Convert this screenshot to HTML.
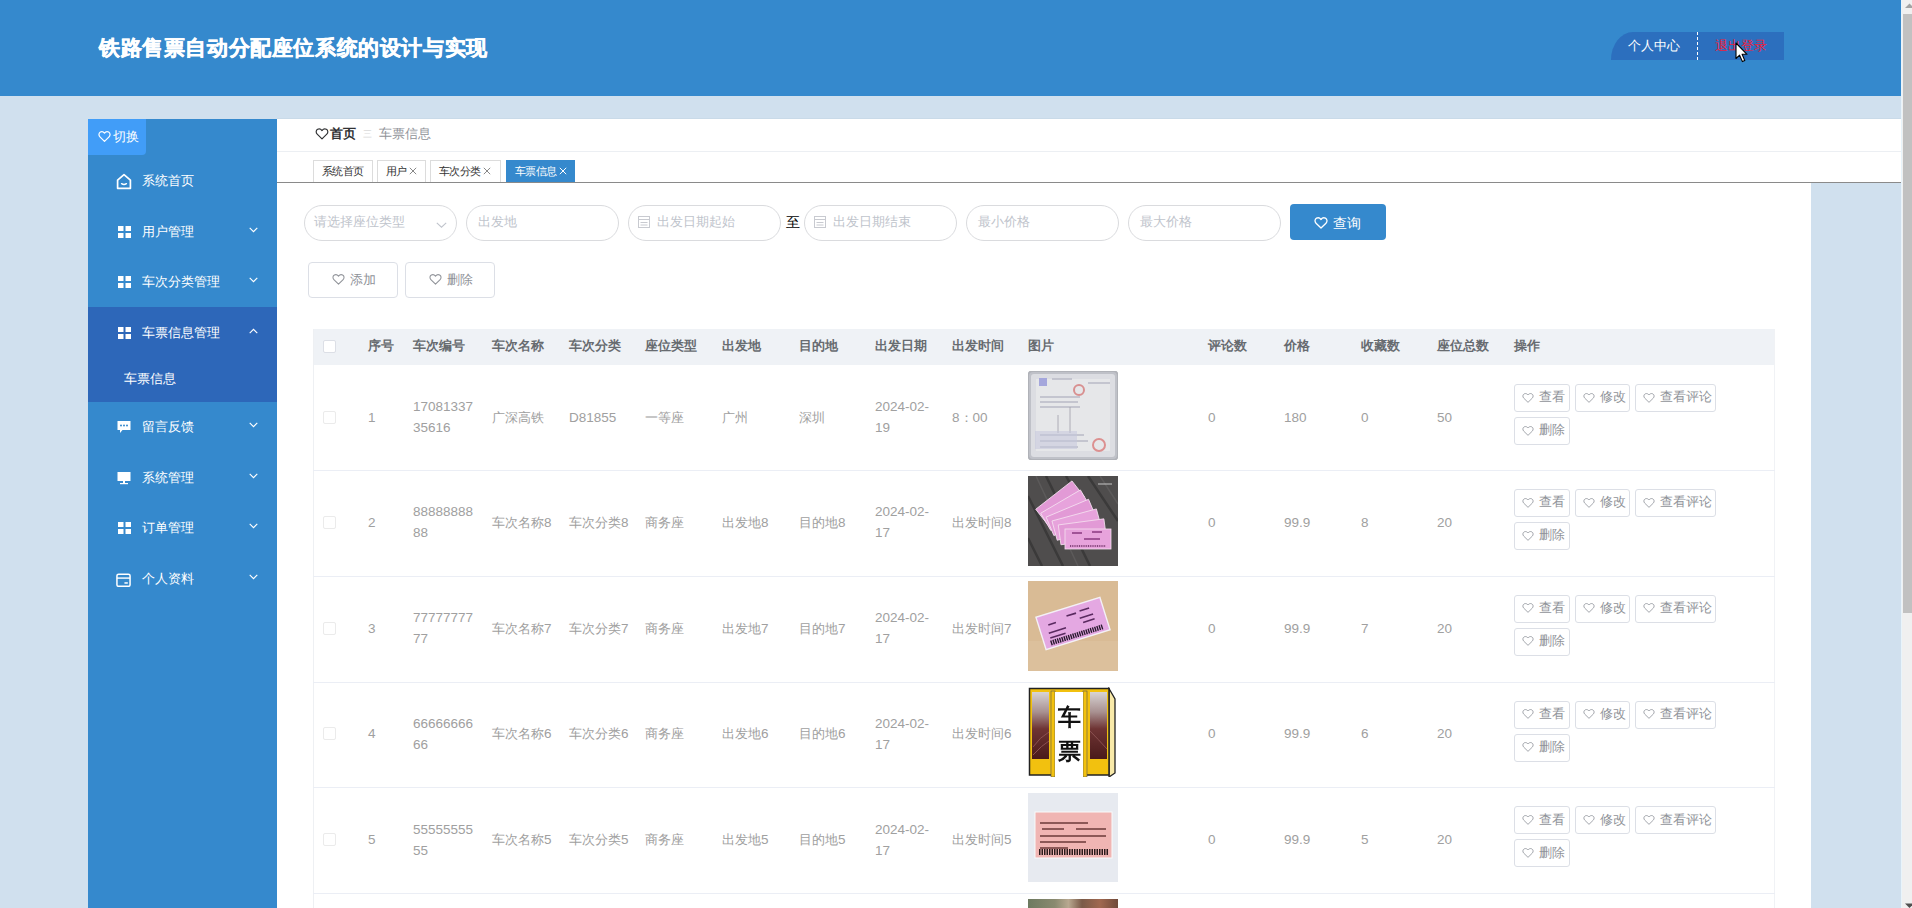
<!DOCTYPE html>
<html><head><meta charset="utf-8">
<style>
*{box-sizing:border-box;margin:0;padding:0}
html,body{width:1912px;height:908px;overflow:hidden}
body{position:relative;background:#d0e0ee;font-family:"Liberation Sans",sans-serif;color:#606266}
.abs{position:absolute}
#hdr{left:0;top:0;width:1901px;height:96px;background:#3589cd}
#title{left:99px;top:33px;font-size:21px;letter-spacing:0.6px;font-weight:bold;color:#fff;line-height:30px;white-space:nowrap;-webkit-text-stroke:0.35px #fff;text-shadow:0 0 1px rgba(255,255,255,.35)}
#ubox{left:1611px;top:32px;width:173px;height:28px;background:#2c6fbe;border-top-left-radius:22px 28px}
#ubox .t{position:absolute;top:0;line-height:28px;font-size:12.6px;white-space:nowrap}
#ubox .div{position:absolute;left:86px;top:0;height:28px;border-left:1px dashed #fff}
#scroll{left:1901px;top:0;width:11px;height:908px;background:#f0f0f0}
#thumb{left:1903px;top:14px;width:9px;height:599px;background:#c1c1c1}
#side{left:88px;top:119px;width:189px;height:789px;background:#3589cd}
#switch{left:88px;top:119px;width:58px;height:36px;background:#419df8;border-bottom-right-radius:4px;color:#fff;white-space:nowrap}
.mi{position:absolute;left:88px;width:189px;height:0;color:#fff;font-size:12.8px;font-weight:500;white-space:nowrap}
.mi .tx{position:absolute;left:54px;top:-10px;line-height:20px}
.mi .ic{position:absolute;left:29px;top:18px;width:14px;height:14px}
.mi .chev{position:absolute;left:161px;top:20px;width:9px;height:6px}
#grp{left:88px;top:307px;width:189px;height:95px;background:#2d67b9}
#panel{left:277px;top:119px;width:1624px;height:64px;background:#fff}
#bc{left:277px;top:151px;width:1624px;height:1px;background:#eceff3}
#tabline{left:277px;top:182px;width:1624px;height:1px;background:#8a8a8a}
#content{left:277px;top:183px;width:1534px;height:725px;background:#fff}
.tab{position:absolute;top:160px;height:22px;border:1px solid #dcdcdc;border-bottom:none;font-size:11px;letter-spacing:-0.6px;line-height:21px;color:#333;white-space:nowrap;padding-left:8px;background:#fff}
.tab.on{background:#3589cd;color:#fff;border-color:#3589cd}
.inp{position:absolute;top:205px;width:153px;height:36px;border:1px solid #dadbde;border-radius:18px;background:#fff;font-size:12.6px;color:#c0c4cc;line-height:32px;padding-left:10px;white-space:nowrap}
.btn{position:absolute;border:1px solid #dcdfe6;border-radius:4px;background:#fff;font-size:12.6px;color:#909399;white-space:nowrap}
.th{position:absolute;top:337px;font-size:12.8px;line-height:18px;font-weight:bold;color:#676b70;white-space:nowrap}
.td{position:absolute;font-size:13.5px;color:#a0a0a0;white-space:nowrap}
.td .c{font-size:12.8px}
.ab{position:absolute;height:28px;border:1px solid #dcdfe6;border-radius:3px;background:#fff;font-size:12.6px;line-height:25px;color:#909399;white-space:nowrap;padding-left:7px}
</style></head><body>
<div id="hdr" class="abs"></div>
<div id="title" class="abs">铁路售票自动分配座位系统的设计与实现</div>
<div id="ubox" class="abs">
  <span class="t" style="left:17px;color:#fff">个人中心</span>
  <span class="div"></span>
  <span class="t" style="left:104px;color:#ee1d3b">退出登录</span>
</div>
<svg class="abs" style="left:1735px;top:42px" width="14" height="21" viewBox="0 0 14 21"><path d="M1 1 V16.5 L4.6 13.2 L7.4 19.6 L9.8 18.6 L7.1 12.3 L12 12.3 Z" fill="#fff" stroke="#000" stroke-width="1.1" stroke-linejoin="round"/></svg>
<div id="scroll" class="abs"></div>
<div id="thumb" class="abs"></div>
<div class="abs" style="left:1901px;top:0;width:1px;height:908px;background:#e8f4fb"></div>
<svg class="abs" style="left:1904px;top:3px" width="8" height="6" viewBox="0 0 8 6"><path d="M1 5 L5.5 0.5 L10 5 Z" fill="#a3a3a3"/></svg>
<svg class="abs" style="left:1904px;top:903px" width="8" height="5" viewBox="0 0 8 5"><path d="M1 0.5 L5.5 5 L10 0.5 Z" fill="#505050"/></svg>

<div id="side" class="abs"></div>
<div id="grp" class="abs"></div>
<div id="switch" class="abs"><svg class="abs" style="left:10px;top:11px" width="13" height="13" viewBox="0 0 16 16"><path d="M8 14 L2.4 8.4 C0.6 6.6 0.8 3.6 2.9 2.4 C4.8 1.4 6.8 2.2 8 3.9 C9.2 2.2 11.2 1.4 13.1 2.4 C15.2 3.6 15.4 6.6 13.6 8.4 Z" fill="none" stroke="#fff" stroke-width="1.5" stroke-linejoin="round"/></svg><span class="abs" style="left:25px;top:9px;line-height:18px;font-size:13px;letter-spacing:-0.2px">切换</span></div>
<div class="mi" style="top:181px"><svg class="ic" viewBox="0 0 16 16" style="left:28px;top:-8.5px;width:16px;height:17px"><path d="M1.6 6.6 L8 1.2 L14.4 6.6 V14.8 H1.6 Z" fill="none" stroke="#fff" stroke-width="1.7" stroke-linejoin="round"/><path d="M5.6 10.2 Q8 11.8 10.4 10.2" fill="none" stroke="#fff" stroke-width="1.5" stroke-linecap="round"/></svg><span class="tx">系统首页</span></div>
<div class="mi" style="top:232px"><svg class="ic" viewBox="0 0 13 12" style="left:30px;top:-6px;width:13px;height:12px"><rect x="0" y="0" width="5.5" height="5" fill="#fff"/><rect x="7.5" y="0" width="5.5" height="5" fill="#fff"/><rect x="0" y="7" width="5.5" height="5" fill="#fff"/><rect x="7.5" y="7" width="5.5" height="5" fill="#fff"/></svg><span class="tx">用户管理</span><svg class="chev" viewBox="0 0 9 6" style="left:161px;top:-5px;width:9px;height:6px"><path d="M0.7 0.8 L4.5 4.6 L8.3 0.8" fill="none" stroke="#fff" stroke-width="1.1"/></svg></div>
<div class="mi" style="top:282px"><svg class="ic" viewBox="0 0 13 12" style="left:30px;top:-6px;width:13px;height:12px"><rect x="0" y="0" width="5.5" height="5" fill="#fff"/><rect x="7.5" y="0" width="5.5" height="5" fill="#fff"/><rect x="0" y="7" width="5.5" height="5" fill="#fff"/><rect x="7.5" y="7" width="5.5" height="5" fill="#fff"/></svg><span class="tx">车次分类管理</span><svg class="chev" viewBox="0 0 9 6" style="left:161px;top:-5px;width:9px;height:6px"><path d="M0.7 0.8 L4.5 4.6 L8.3 0.8" fill="none" stroke="#fff" stroke-width="1.1"/></svg></div>
<div class="mi" style="top:333px"><svg class="ic" viewBox="0 0 13 12" style="left:30px;top:-6px;width:13px;height:12px"><rect x="0" y="0" width="5.5" height="5" fill="#fff"/><rect x="7.5" y="0" width="5.5" height="5" fill="#fff"/><rect x="0" y="7" width="5.5" height="5" fill="#fff"/><rect x="7.5" y="7" width="5.5" height="5" fill="#fff"/></svg><span class="tx">车票信息管理</span><svg class="chev" viewBox="0 0 9 6" style="left:161px;top:-5px;width:9px;height:6px"><path d="M0.7 5.2 L4.5 1.4 L8.3 5.2" fill="none" stroke="#fff" stroke-width="1.1"/></svg></div>
<div class="mi" style="top:427px"><svg class="ic" viewBox="0 0 14 14" style="left:29px;top:-7px;width:14px;height:14px"><path d="M0.5 1 H13.5 V10 H5.5 L3 13 V10 H0.5 Z" fill="#fff"/><circle cx="4" cy="5.5" r="1" fill="#3589cd"/><circle cx="7" cy="5.5" r="1" fill="#3589cd"/><circle cx="10" cy="5.5" r="1" fill="#3589cd"/></svg><span class="tx">留言反馈</span><svg class="chev" viewBox="0 0 9 6" style="left:161px;top:-5px;width:9px;height:6px"><path d="M0.7 0.8 L4.5 4.6 L8.3 0.8" fill="none" stroke="#fff" stroke-width="1.1"/></svg></div>
<div class="mi" style="top:478px"><svg class="ic" viewBox="0 0 14 14" style="left:29px;top:-7px;width:14px;height:14px"><rect x="0.5" y="1" width="13" height="9" fill="#fff"/><rect x="6" y="10" width="2" height="2" fill="#fff"/><rect x="3" y="12" width="8" height="1.2" fill="#fff"/></svg><span class="tx">系统管理</span><svg class="chev" viewBox="0 0 9 6" style="left:161px;top:-5px;width:9px;height:6px"><path d="M0.7 0.8 L4.5 4.6 L8.3 0.8" fill="none" stroke="#fff" stroke-width="1.1"/></svg></div>
<div class="mi" style="top:528px"><svg class="ic" viewBox="0 0 13 12" style="left:30px;top:-6px;width:13px;height:12px"><rect x="0" y="0" width="5.5" height="5" fill="#fff"/><rect x="7.5" y="0" width="5.5" height="5" fill="#fff"/><rect x="0" y="7" width="5.5" height="5" fill="#fff"/><rect x="7.5" y="7" width="5.5" height="5" fill="#fff"/></svg><span class="tx">订单管理</span><svg class="chev" viewBox="0 0 9 6" style="left:161px;top:-5px;width:9px;height:6px"><path d="M0.7 0.8 L4.5 4.6 L8.3 0.8" fill="none" stroke="#fff" stroke-width="1.1"/></svg></div>
<div class="mi" style="top:579px"><svg class="ic" viewBox="0 0 16 15" style="left:28px;top:-6.5px;width:15px;height:14.5px"><rect x="1" y="1" width="14" height="13" rx="1.8" fill="none" stroke="#fff" stroke-width="1.6"/><path d="M1 5.2 H15" stroke="#fff" stroke-width="1.5"/><path d="M9 10.4 H12.6" stroke="#fff" stroke-width="1.6"/></svg><span class="tx">个人资料</span><svg class="chev" viewBox="0 0 9 6" style="left:161px;top:-5px;width:9px;height:6px"><path d="M0.7 0.8 L4.5 4.6 L8.3 0.8" fill="none" stroke="#fff" stroke-width="1.1"/></svg></div>
<div class="mi" style="top:379px"><span class="tx" style="left:36px">车票信息</span></div>

<div id="panel" class="abs"></div>
<div class="abs" style="left:277px;top:118px;width:1624px;height:1px;background:#c9dae8"></div>
<div id="bc" class="abs"></div>
<div id="tabline" class="abs"></div>
<div id="content" class="abs"></div>
<div class="abs" style="left:314px;top:124px;height:18px;line-height:18px;font-size:13px;white-space:nowrap;color:#303133"><svg width="14" height="14" viewBox="0 0 16 16" style="display:inline-block;vertical-align:middle;margin-left:1px"><path d="M8 13.6 L2.5 8.2 C0.8 6.5 1 3.7 3 2.6 C4.9 1.6 6.8 2.4 8 4.1 C9.2 2.4 11.1 1.6 13 2.6 C15 3.7 15.2 6.5 13.5 8.2 Z" fill="none" stroke="#303133" stroke-width="1.35" stroke-linejoin="round"/></svg><span style="vertical-align:middle;font-weight:bold;margin-left:1px;letter-spacing:-0.3px">首页</span><span style="vertical-align:middle;color:#dadada;margin-left:8px;font-size:9px">三</span><span style="vertical-align:middle;color:#909399;margin-left:7px;letter-spacing:-0.3px">车票信息</span></div>
<div class="tab" style="left:313px;width:60px">系统首页</div>
<div class="tab" style="left:377px;width:49px">用户<svg width="8" height="8" viewBox="0 0 8 8" style="display:inline-block;vertical-align:middle;margin-left:2px;margin-top:-2px"><path d="M0.8 0.8 L7.2 7.2 M7.2 0.8 L0.8 7.2" stroke="#888" stroke-width="1"/></svg></div>
<div class="tab" style="left:430px;width:71px">车次分类<svg width="8" height="8" viewBox="0 0 8 8" style="display:inline-block;vertical-align:middle;margin-left:2px;margin-top:-2px"><path d="M0.8 0.8 L7.2 7.2 M7.2 0.8 L0.8 7.2" stroke="#888" stroke-width="1"/></svg></div>
<div class="tab on" style="left:506px;width:69px">车票信息<svg width="8" height="8" viewBox="0 0 8 8" style="display:inline-block;vertical-align:middle;margin-left:2px;margin-top:-2px"><path d="M0.8 0.8 L7.2 7.2 M7.2 0.8 L0.8 7.2" stroke="#fff" stroke-width="1"/></svg></div>

<div class="inp" style="left:304px;padding-left:9px"><svg width="11" height="6" viewBox="0 0 11 6" style="position:absolute;left:131px;top:16px"><path d="M0.8 0.8 L5.5 5.2 L10.2 0.8" fill="none" stroke="#c0c4cc" stroke-width="1.1"/></svg>请选择座位类型</div>
<div class="inp" style="left:466px;padding-left:11px">出发地</div>
<div class="inp" style="left:628px;padding-left:28px"><svg width="12" height="12" viewBox="0 0 12 12" style="position:absolute;left:9px;top:10px"><rect x="0.5" y="0.5" width="11" height="11" fill="none" stroke="#c8cad0" stroke-width="1"/><path d="M0.5 3.5 H11.5 M2.5 6.5 H9.5 M2.5 9 H9.5" stroke="#c8cad0" stroke-width="1"/></svg>出发日期起始</div>
<div class="inp" style="left:804px;padding-left:28px"><svg width="12" height="12" viewBox="0 0 12 12" style="position:absolute;left:9px;top:10px"><rect x="0.5" y="0.5" width="11" height="11" fill="none" stroke="#c8cad0" stroke-width="1"/><path d="M0.5 3.5 H11.5 M2.5 6.5 H9.5 M2.5 9 H9.5" stroke="#c8cad0" stroke-width="1"/></svg>出发日期结束</div>
<div class="inp" style="left:966px;padding-left:10.5px">最小价格</div>
<div class="inp" style="left:1128px;padding-left:10.5px">最大价格</div>
<div class="abs" style="left:786px;top:213px;font-size:14px;line-height:18px;color:#000">至</div>
<div class="abs" style="left:1290px;top:204px;width:96px;height:36px;background:#3589cd;border-radius:4px;color:#fff;font-size:14px;line-height:36px;white-space:nowrap;padding-left:24px"><svg width="14" height="14" viewBox="0 0 16 16" style="display:inline-block;vertical-align:middle;"><path d="M8 13.8 L2.3 8.2 C0.6 6.5 0.8 3.6 2.9 2.5 C4.8 1.5 6.8 2.3 8 4 C9.2 2.3 11.2 1.5 13.1 2.5 C15.2 3.6 15.4 6.5 13.7 8.2 Z" fill="none" stroke="#fff" stroke-width="1.5" stroke-linejoin="round"/></svg><span style="vertical-align:middle;margin-left:5px">查询</span></div>
<div class="btn" style="left:308px;top:262px;width:90px;height:36px;line-height:32px;padding-left:23px"><svg width="13" height="13" viewBox="0 0 16 16" style="display:inline-block;vertical-align:middle;"><path d="M8 13.8 L2.3 8.2 C0.6 6.5 0.8 3.6 2.9 2.5 C4.8 1.5 6.8 2.3 8 4 C9.2 2.3 11.2 1.5 13.1 2.5 C15.2 3.6 15.4 6.5 13.7 8.2 Z" fill="none" stroke="#909399" stroke-width="1.3" stroke-linejoin="round"/></svg><span style="vertical-align:middle;margin-left:5px">添加</span></div>
<div class="btn" style="left:405px;top:262px;width:90px;height:36px;line-height:32px;padding-left:23px"><svg width="13" height="13" viewBox="0 0 16 16" style="display:inline-block;vertical-align:middle;"><path d="M8 13.8 L2.3 8.2 C0.6 6.5 0.8 3.6 2.9 2.5 C4.8 1.5 6.8 2.3 8 4 C9.2 2.3 11.2 1.5 13.1 2.5 C15.2 3.6 15.4 6.5 13.7 8.2 Z" fill="none" stroke="#909399" stroke-width="1.3" stroke-linejoin="round"/></svg><span style="vertical-align:middle;margin-left:5px">删除</span></div>









<!--TABLE-->
<div class="abs" style="left:313px;top:329px;width:1462px;height:36px;background:#eff2f6"></div>
<div class="abs" style="left:313px;top:329px;width:1px;height:579px;background:#eef0f3"></div>
<div class="abs" style="left:1774px;top:329px;width:1px;height:579px;background:#f0f2f5"></div>
<div class="abs" style="left:323px;top:340px;width:13px;height:13px;border:1px solid #dcdfe6;background:#fff;border-radius:2px"></div>
<div class="th" style="left:368px">序号</div>
<div class="th" style="left:413px">车次编号</div>
<div class="th" style="left:492px">车次名称</div>
<div class="th" style="left:569px">车次分类</div>
<div class="th" style="left:645px">座位类型</div>
<div class="th" style="left:722px">出发地</div>
<div class="th" style="left:799px">目的地</div>
<div class="th" style="left:875px">出发日期</div>
<div class="th" style="left:952px">出发时间</div>
<div class="th" style="left:1028px">图片</div>
<div class="th" style="left:1208px">评论数</div>
<div class="th" style="left:1284px">价格</div>
<div class="th" style="left:1361px">收藏数</div>
<div class="th" style="left:1437px">座位总数</div>
<div class="th" style="left:1514px">操作</div>
<div class="abs" style="left:323px;top:410.7px;width:13px;height:13px;border:1px solid #ebebeb;border-radius:2px;background:#fff"></div>
<div class="td" style="left:368px;top:406.7px;line-height:21px">1</div>
<div class="td" style="left:413px;top:396.2px;line-height:21px">17081337<br>35616</div>
<div class="td" style="left:492px;top:406.7px;line-height:21px"><span class="c">广深高铁</span></div>
<div class="td" style="left:569px;top:406.7px;line-height:21px">D81855</div>
<div class="td" style="left:645px;top:406.7px;line-height:21px"><span class="c">一等座</span></div>
<div class="td" style="left:722px;top:406.7px;line-height:21px"><span class="c">广州</span></div>
<div class="td" style="left:799px;top:406.7px;line-height:21px"><span class="c">深圳</span></div>
<div class="td" style="left:875px;top:396.2px;line-height:21px">2024-02-<br>19</div>
<div class="td" style="left:952px;top:406.7px;line-height:21px">8<span class="c">：</span>00</div>
<div class="abs" style="left:1028px;top:370.5px;width:90px;height:90px;overflow:hidden;filter:blur(0.4px)"><svg width="90" height="89" viewBox="0 0 90 89">
<rect width="90" height="89" rx="5" fill="#bfc1c8"/>
<rect x="3" y="3" width="84" height="83" rx="3" fill="#dcdde2"/>
<rect x="8" y="8" width="74" height="72" fill="#e6e7e9"/>
<rect x="11" y="7" width="8" height="8" fill="#a5a7dc"/>
<circle cx="51" cy="19" r="5" fill="none" stroke="#d89090" stroke-width="2"/>
<circle cx="71" cy="74" r="6" fill="none" stroke="#dc9090" stroke-width="2"/>
<path d="M12 26 H52 M12 31 H50 M12 36 H52 M12 64 H56 M12 70 H60 M12 76 H50 M24 8 H44 M60 12 H82" stroke="#b9bac6" stroke-width="1.3"/>
<path d="M42 36 V62 M30 44 V62" stroke="#a0a0a8" stroke-width="0.8"/>
<rect x="7" y="60" width="42" height="18" fill="#c4c6dc" opacity=".55"/>
<rect x="0" y="0" width="90" height="89" rx="5" fill="none" stroke="#b0b2b8" stroke-width="2"/>
</svg></div>
<div class="td" style="left:1208px;top:406.7px;line-height:21px">0</div>
<div class="td" style="left:1284px;top:406.7px;line-height:21px">180</div>
<div class="td" style="left:1361px;top:406.7px;line-height:21px">0</div>
<div class="td" style="left:1437px;top:406.7px;line-height:21px">50</div>
<div class="ab" style="left:1514px;top:384.0px;width:56px"><svg width="12" height="12" viewBox="0 0 16 16" style="display:inline-block;vertical-align:middle;"><path d="M8 13.8 L2.3 8.2 C0.6 6.5 0.8 3.6 2.9 2.5 C4.8 1.5 6.8 2.3 8 4 C9.2 2.3 11.2 1.5 13.1 2.5 C15.2 3.6 15.4 6.5 13.7 8.2 Z" fill="none" stroke="#a0a3aa" stroke-width="1.3" stroke-linejoin="round"/></svg><span style="vertical-align:middle;margin-left:5px">查看</span></div>
<div class="ab" style="left:1575px;top:384.0px;width:55px"><svg width="12" height="12" viewBox="0 0 16 16" style="display:inline-block;vertical-align:middle;"><path d="M8 13.8 L2.3 8.2 C0.6 6.5 0.8 3.6 2.9 2.5 C4.8 1.5 6.8 2.3 8 4 C9.2 2.3 11.2 1.5 13.1 2.5 C15.2 3.6 15.4 6.5 13.7 8.2 Z" fill="none" stroke="#a0a3aa" stroke-width="1.3" stroke-linejoin="round"/></svg><span style="vertical-align:middle;margin-left:5px">修改</span></div>
<div class="ab" style="left:1635px;top:384.0px;width:81px"><svg width="12" height="12" viewBox="0 0 16 16" style="display:inline-block;vertical-align:middle;"><path d="M8 13.8 L2.3 8.2 C0.6 6.5 0.8 3.6 2.9 2.5 C4.8 1.5 6.8 2.3 8 4 C9.2 2.3 11.2 1.5 13.1 2.5 C15.2 3.6 15.4 6.5 13.7 8.2 Z" fill="none" stroke="#a0a3aa" stroke-width="1.3" stroke-linejoin="round"/></svg><span style="vertical-align:middle;margin-left:5px">查看评论</span></div>
<div class="ab" style="left:1514px;top:417.0px;width:56px"><svg width="12" height="12" viewBox="0 0 16 16" style="display:inline-block;vertical-align:middle;"><path d="M8 13.8 L2.3 8.2 C0.6 6.5 0.8 3.6 2.9 2.5 C4.8 1.5 6.8 2.3 8 4 C9.2 2.3 11.2 1.5 13.1 2.5 C15.2 3.6 15.4 6.5 13.7 8.2 Z" fill="none" stroke="#a0a3aa" stroke-width="1.3" stroke-linejoin="round"/></svg><span style="vertical-align:middle;margin-left:5px">删除</span></div>
<div class="abs" style="left:313px;top:470.0px;width:1462px;height:1px;background:#ebeef5"></div>
<div class="abs" style="left:323px;top:515.7px;width:13px;height:13px;border:1px solid #ebebeb;border-radius:2px;background:#fff"></div>
<div class="td" style="left:368px;top:511.7px;line-height:21px">2</div>
<div class="td" style="left:413px;top:501.2px;line-height:21px">88888888<br>88</div>
<div class="td" style="left:492px;top:511.7px;line-height:21px"><span class="c">车次名称</span>8</div>
<div class="td" style="left:569px;top:511.7px;line-height:21px"><span class="c">车次分类</span>8</div>
<div class="td" style="left:645px;top:511.7px;line-height:21px"><span class="c">商务座</span></div>
<div class="td" style="left:722px;top:511.7px;line-height:21px"><span class="c">出发地</span>8</div>
<div class="td" style="left:799px;top:511.7px;line-height:21px"><span class="c">目的地</span>8</div>
<div class="td" style="left:875px;top:501.2px;line-height:21px">2024-02-<br>17</div>
<div class="td" style="left:952px;top:511.7px;line-height:21px"><span class="c">出发时间</span>8</div>
<div class="abs" style="left:1028px;top:475.5px;width:90px;height:90px;overflow:hidden;filter:blur(0.4px)"><svg width="90" height="90" viewBox="0 0 90 90">
<rect width="90" height="90" fill="#4f4d4d"/>
<path d="M0 20 L35 90 M18 0 L62 90 M60 0 L90 45 M0 62 L14 90 M38 0 L52 25" stroke="#3b3a3a" stroke-width="2.5"/>
<path d="M8 0 L50 90 M72 0 L90 28" stroke="#5c5a5a" stroke-width="1.5"/>
<g stroke="#f5e0f0" stroke-width="0.8"><g transform="translate(32.0 27.0) rotate(-38.0)"><rect x="-23" y="-10" width="46" height="20" fill="#e29ad6"/></g><g transform="translate(37.6 34.2) rotate(-30.4)"><rect x="-23" y="-10" width="46" height="20" fill="#e7a3dc"/></g><g transform="translate(43.2 41.4) rotate(-22.8)"><rect x="-23" y="-10" width="46" height="20" fill="#e29ad6"/></g><g transform="translate(48.8 48.6) rotate(-15.2)"><rect x="-23" y="-10" width="46" height="20" fill="#e7a3dc"/></g><g transform="translate(54.4 55.8) rotate(-7.6)"><rect x="-23" y="-10" width="46" height="20" fill="#e29ad6"/></g><g transform="translate(60.0 63.0) rotate(0.0)"><rect x="-23" y="-10" width="46" height="20" fill="#e7a3dc"/></g></g>
<path d="M44 57 H54 M64 56 H74 M56 63 H72" stroke="#8a3a80" stroke-width="1.3"/>
<path d="M42 70 H78" stroke="#6a2a60" stroke-width="1.6" stroke-dasharray="1 0.8"/>
<path d="M70 8 H84" stroke="#ddd" stroke-width="1.2" opacity=".7"/>
</svg></div>
<div class="td" style="left:1208px;top:511.7px;line-height:21px">0</div>
<div class="td" style="left:1284px;top:511.7px;line-height:21px">99.9</div>
<div class="td" style="left:1361px;top:511.7px;line-height:21px">8</div>
<div class="td" style="left:1437px;top:511.7px;line-height:21px">20</div>
<div class="ab" style="left:1514px;top:489.0px;width:56px"><svg width="12" height="12" viewBox="0 0 16 16" style="display:inline-block;vertical-align:middle;"><path d="M8 13.8 L2.3 8.2 C0.6 6.5 0.8 3.6 2.9 2.5 C4.8 1.5 6.8 2.3 8 4 C9.2 2.3 11.2 1.5 13.1 2.5 C15.2 3.6 15.4 6.5 13.7 8.2 Z" fill="none" stroke="#a0a3aa" stroke-width="1.3" stroke-linejoin="round"/></svg><span style="vertical-align:middle;margin-left:5px">查看</span></div>
<div class="ab" style="left:1575px;top:489.0px;width:55px"><svg width="12" height="12" viewBox="0 0 16 16" style="display:inline-block;vertical-align:middle;"><path d="M8 13.8 L2.3 8.2 C0.6 6.5 0.8 3.6 2.9 2.5 C4.8 1.5 6.8 2.3 8 4 C9.2 2.3 11.2 1.5 13.1 2.5 C15.2 3.6 15.4 6.5 13.7 8.2 Z" fill="none" stroke="#a0a3aa" stroke-width="1.3" stroke-linejoin="round"/></svg><span style="vertical-align:middle;margin-left:5px">修改</span></div>
<div class="ab" style="left:1635px;top:489.0px;width:81px"><svg width="12" height="12" viewBox="0 0 16 16" style="display:inline-block;vertical-align:middle;"><path d="M8 13.8 L2.3 8.2 C0.6 6.5 0.8 3.6 2.9 2.5 C4.8 1.5 6.8 2.3 8 4 C9.2 2.3 11.2 1.5 13.1 2.5 C15.2 3.6 15.4 6.5 13.7 8.2 Z" fill="none" stroke="#a0a3aa" stroke-width="1.3" stroke-linejoin="round"/></svg><span style="vertical-align:middle;margin-left:5px">查看评论</span></div>
<div class="ab" style="left:1514px;top:522.0px;width:56px"><svg width="12" height="12" viewBox="0 0 16 16" style="display:inline-block;vertical-align:middle;"><path d="M8 13.8 L2.3 8.2 C0.6 6.5 0.8 3.6 2.9 2.5 C4.8 1.5 6.8 2.3 8 4 C9.2 2.3 11.2 1.5 13.1 2.5 C15.2 3.6 15.4 6.5 13.7 8.2 Z" fill="none" stroke="#a0a3aa" stroke-width="1.3" stroke-linejoin="round"/></svg><span style="vertical-align:middle;margin-left:5px">删除</span></div>
<div class="abs" style="left:313px;top:575.8px;width:1462px;height:1px;background:#ebeef5"></div>
<div class="abs" style="left:323px;top:621.5px;width:13px;height:13px;border:1px solid #ebebeb;border-radius:2px;background:#fff"></div>
<div class="td" style="left:368px;top:617.5px;line-height:21px">3</div>
<div class="td" style="left:413px;top:607.0px;line-height:21px">77777777<br>77</div>
<div class="td" style="left:492px;top:617.5px;line-height:21px"><span class="c">车次名称</span>7</div>
<div class="td" style="left:569px;top:617.5px;line-height:21px"><span class="c">车次分类</span>7</div>
<div class="td" style="left:645px;top:617.5px;line-height:21px"><span class="c">商务座</span></div>
<div class="td" style="left:722px;top:617.5px;line-height:21px"><span class="c">出发地</span>7</div>
<div class="td" style="left:799px;top:617.5px;line-height:21px"><span class="c">目的地</span>7</div>
<div class="td" style="left:875px;top:607.0px;line-height:21px">2024-02-<br>17</div>
<div class="td" style="left:952px;top:617.5px;line-height:21px"><span class="c">出发时间</span>7</div>
<div class="abs" style="left:1028px;top:581.3px;width:90px;height:90px;overflow:hidden;filter:blur(0.4px)"><svg width="90" height="90" viewBox="0 0 90 90">
<rect width="90" height="90" fill="#d9bb95"/>
<rect x="0" y="60" width="90" height="30" fill="#dcc09c"/>
<g transform="translate(45 42.5) rotate(-17.4)">
<rect x="-33.5" y="-17" width="67" height="34" fill="#e4a8e2" stroke="#f4f0f6" stroke-width="1.4"/>
<path d="M-24 -6 H-16 M-4 -9 H6 M10 -10 H20 M-26 2 H-8 M-26 7 H-10 M8 -3 H22 M10 2 H22" stroke="#5a2a60" stroke-width="1.6"/>
<path d="M-27 12 H28" stroke="#2a1a30" stroke-width="5" stroke-dasharray="1.4 0.9"/>
</g>
</svg></div>
<div class="td" style="left:1208px;top:617.5px;line-height:21px">0</div>
<div class="td" style="left:1284px;top:617.5px;line-height:21px">99.9</div>
<div class="td" style="left:1361px;top:617.5px;line-height:21px">7</div>
<div class="td" style="left:1437px;top:617.5px;line-height:21px">20</div>
<div class="ab" style="left:1514px;top:594.8px;width:56px"><svg width="12" height="12" viewBox="0 0 16 16" style="display:inline-block;vertical-align:middle;"><path d="M8 13.8 L2.3 8.2 C0.6 6.5 0.8 3.6 2.9 2.5 C4.8 1.5 6.8 2.3 8 4 C9.2 2.3 11.2 1.5 13.1 2.5 C15.2 3.6 15.4 6.5 13.7 8.2 Z" fill="none" stroke="#a0a3aa" stroke-width="1.3" stroke-linejoin="round"/></svg><span style="vertical-align:middle;margin-left:5px">查看</span></div>
<div class="ab" style="left:1575px;top:594.8px;width:55px"><svg width="12" height="12" viewBox="0 0 16 16" style="display:inline-block;vertical-align:middle;"><path d="M8 13.8 L2.3 8.2 C0.6 6.5 0.8 3.6 2.9 2.5 C4.8 1.5 6.8 2.3 8 4 C9.2 2.3 11.2 1.5 13.1 2.5 C15.2 3.6 15.4 6.5 13.7 8.2 Z" fill="none" stroke="#a0a3aa" stroke-width="1.3" stroke-linejoin="round"/></svg><span style="vertical-align:middle;margin-left:5px">修改</span></div>
<div class="ab" style="left:1635px;top:594.8px;width:81px"><svg width="12" height="12" viewBox="0 0 16 16" style="display:inline-block;vertical-align:middle;"><path d="M8 13.8 L2.3 8.2 C0.6 6.5 0.8 3.6 2.9 2.5 C4.8 1.5 6.8 2.3 8 4 C9.2 2.3 11.2 1.5 13.1 2.5 C15.2 3.6 15.4 6.5 13.7 8.2 Z" fill="none" stroke="#a0a3aa" stroke-width="1.3" stroke-linejoin="round"/></svg><span style="vertical-align:middle;margin-left:5px">查看评论</span></div>
<div class="ab" style="left:1514px;top:627.8px;width:56px"><svg width="12" height="12" viewBox="0 0 16 16" style="display:inline-block;vertical-align:middle;"><path d="M8 13.8 L2.3 8.2 C0.6 6.5 0.8 3.6 2.9 2.5 C4.8 1.5 6.8 2.3 8 4 C9.2 2.3 11.2 1.5 13.1 2.5 C15.2 3.6 15.4 6.5 13.7 8.2 Z" fill="none" stroke="#a0a3aa" stroke-width="1.3" stroke-linejoin="round"/></svg><span style="vertical-align:middle;margin-left:5px">删除</span></div>
<div class="abs" style="left:313px;top:681.6px;width:1462px;height:1px;background:#ebeef5"></div>
<div class="abs" style="left:323px;top:727.3px;width:13px;height:13px;border:1px solid #ebebeb;border-radius:2px;background:#fff"></div>
<div class="td" style="left:368px;top:723.3px;line-height:21px">4</div>
<div class="td" style="left:413px;top:712.8px;line-height:21px">66666666<br>66</div>
<div class="td" style="left:492px;top:723.3px;line-height:21px"><span class="c">车次名称</span>6</div>
<div class="td" style="left:569px;top:723.3px;line-height:21px"><span class="c">车次分类</span>6</div>
<div class="td" style="left:645px;top:723.3px;line-height:21px"><span class="c">商务座</span></div>
<div class="td" style="left:722px;top:723.3px;line-height:21px"><span class="c">出发地</span>6</div>
<div class="td" style="left:799px;top:723.3px;line-height:21px"><span class="c">目的地</span>6</div>
<div class="td" style="left:875px;top:712.8px;line-height:21px">2024-02-<br>17</div>
<div class="td" style="left:952px;top:723.3px;line-height:21px"><span class="c">出发时间</span>6</div>
<div class="abs" style="left:1028px;top:687.1px;width:90px;height:90px;overflow:hidden;filter:blur(0.4px)"><svg width="90" height="90" viewBox="0 0 90 90">
<defs><linearGradient id="g4" x1="0" y1="0" x2="0" y2="1"><stop offset="0" stop-color="#d8d4d4"/><stop offset="0.3" stop-color="#a89090"/><stop offset="0.55" stop-color="#6e3434"/><stop offset="1" stop-color="#4a1a1a"/></linearGradient></defs>
<rect width="90" height="90" fill="#fff"/>
<path d="M81 1.5 L87 12 V86 L81 90 Z" fill="#f8e9a8" stroke="#222" stroke-width="1.3"/>
<rect x="1.5" y="1.5" width="79.5" height="86.5" fill="#f2c10f" stroke="#222" stroke-width="1.5"/>
<rect x="4" y="5" width="17" height="67" fill="url(#g4)"/>
<rect x="62" y="5" width="17" height="67" fill="url(#g4)"/>
<path d="M5 60 Q12 50 21 45 M5 68 Q14 58 21 54 M62 44 Q70 52 79 62" stroke="#8a5050" stroke-width="1" fill="none"/>
<rect x="23" y="4" width="4" height="86" fill="#f2c10f" stroke="#555" stroke-width="0.6"/>
<rect x="55" y="4" width="4" height="86" fill="#f2c10f" stroke="#555" stroke-width="0.6"/>
<rect x="27" y="5" width="28" height="85" fill="#fff"/>
<text x="41" y="38" font-size="23" font-weight="bold" text-anchor="middle" fill="#111" font-family="Liberation Sans,sans-serif">车</text>
<text x="41" y="72" font-size="23" font-weight="bold" text-anchor="middle" fill="#111" font-family="Liberation Sans,sans-serif">票</text>
</svg></div>
<div class="td" style="left:1208px;top:723.3px;line-height:21px">0</div>
<div class="td" style="left:1284px;top:723.3px;line-height:21px">99.9</div>
<div class="td" style="left:1361px;top:723.3px;line-height:21px">6</div>
<div class="td" style="left:1437px;top:723.3px;line-height:21px">20</div>
<div class="ab" style="left:1514px;top:700.6px;width:56px"><svg width="12" height="12" viewBox="0 0 16 16" style="display:inline-block;vertical-align:middle;"><path d="M8 13.8 L2.3 8.2 C0.6 6.5 0.8 3.6 2.9 2.5 C4.8 1.5 6.8 2.3 8 4 C9.2 2.3 11.2 1.5 13.1 2.5 C15.2 3.6 15.4 6.5 13.7 8.2 Z" fill="none" stroke="#a0a3aa" stroke-width="1.3" stroke-linejoin="round"/></svg><span style="vertical-align:middle;margin-left:5px">查看</span></div>
<div class="ab" style="left:1575px;top:700.6px;width:55px"><svg width="12" height="12" viewBox="0 0 16 16" style="display:inline-block;vertical-align:middle;"><path d="M8 13.8 L2.3 8.2 C0.6 6.5 0.8 3.6 2.9 2.5 C4.8 1.5 6.8 2.3 8 4 C9.2 2.3 11.2 1.5 13.1 2.5 C15.2 3.6 15.4 6.5 13.7 8.2 Z" fill="none" stroke="#a0a3aa" stroke-width="1.3" stroke-linejoin="round"/></svg><span style="vertical-align:middle;margin-left:5px">修改</span></div>
<div class="ab" style="left:1635px;top:700.6px;width:81px"><svg width="12" height="12" viewBox="0 0 16 16" style="display:inline-block;vertical-align:middle;"><path d="M8 13.8 L2.3 8.2 C0.6 6.5 0.8 3.6 2.9 2.5 C4.8 1.5 6.8 2.3 8 4 C9.2 2.3 11.2 1.5 13.1 2.5 C15.2 3.6 15.4 6.5 13.7 8.2 Z" fill="none" stroke="#a0a3aa" stroke-width="1.3" stroke-linejoin="round"/></svg><span style="vertical-align:middle;margin-left:5px">查看评论</span></div>
<div class="ab" style="left:1514px;top:733.6px;width:56px"><svg width="12" height="12" viewBox="0 0 16 16" style="display:inline-block;vertical-align:middle;"><path d="M8 13.8 L2.3 8.2 C0.6 6.5 0.8 3.6 2.9 2.5 C4.8 1.5 6.8 2.3 8 4 C9.2 2.3 11.2 1.5 13.1 2.5 C15.2 3.6 15.4 6.5 13.7 8.2 Z" fill="none" stroke="#a0a3aa" stroke-width="1.3" stroke-linejoin="round"/></svg><span style="vertical-align:middle;margin-left:5px">删除</span></div>
<div class="abs" style="left:313px;top:787.4px;width:1462px;height:1px;background:#ebeef5"></div>
<div class="abs" style="left:323px;top:833.1px;width:13px;height:13px;border:1px solid #ebebeb;border-radius:2px;background:#fff"></div>
<div class="td" style="left:368px;top:829.1px;line-height:21px">5</div>
<div class="td" style="left:413px;top:818.6px;line-height:21px">55555555<br>55</div>
<div class="td" style="left:492px;top:829.1px;line-height:21px"><span class="c">车次名称</span>5</div>
<div class="td" style="left:569px;top:829.1px;line-height:21px"><span class="c">车次分类</span>5</div>
<div class="td" style="left:645px;top:829.1px;line-height:21px"><span class="c">商务座</span></div>
<div class="td" style="left:722px;top:829.1px;line-height:21px"><span class="c">出发地</span>5</div>
<div class="td" style="left:799px;top:829.1px;line-height:21px"><span class="c">目的地</span>5</div>
<div class="td" style="left:875px;top:818.6px;line-height:21px">2024-02-<br>17</div>
<div class="td" style="left:952px;top:829.1px;line-height:21px"><span class="c">出发时间</span>5</div>
<div class="abs" style="left:1028px;top:792.9px;width:90px;height:90px;overflow:hidden;filter:blur(0.4px)"><svg width="90" height="89" viewBox="0 0 90 89">
<rect width="90" height="89" fill="#e7eaf0"/>
<rect x="7" y="19" width="77" height="46" fill="#f0b5b3" stroke="#fafafa" stroke-width="1"/>
<path d="M12 30 H60 M14 36 H36 M48 36 H78 M12 43 H78 M12 49 H58 M12 55 H40" stroke="#6b3a3a" stroke-width="1.6"/>
<path d="M11 59 H80" stroke="#2a1a1a" stroke-width="6" stroke-dasharray="1.5 1"/>
</svg></div>
<div class="td" style="left:1208px;top:829.1px;line-height:21px">0</div>
<div class="td" style="left:1284px;top:829.1px;line-height:21px">99.9</div>
<div class="td" style="left:1361px;top:829.1px;line-height:21px">5</div>
<div class="td" style="left:1437px;top:829.1px;line-height:21px">20</div>
<div class="ab" style="left:1514px;top:806.4px;width:56px"><svg width="12" height="12" viewBox="0 0 16 16" style="display:inline-block;vertical-align:middle;"><path d="M8 13.8 L2.3 8.2 C0.6 6.5 0.8 3.6 2.9 2.5 C4.8 1.5 6.8 2.3 8 4 C9.2 2.3 11.2 1.5 13.1 2.5 C15.2 3.6 15.4 6.5 13.7 8.2 Z" fill="none" stroke="#a0a3aa" stroke-width="1.3" stroke-linejoin="round"/></svg><span style="vertical-align:middle;margin-left:5px">查看</span></div>
<div class="ab" style="left:1575px;top:806.4px;width:55px"><svg width="12" height="12" viewBox="0 0 16 16" style="display:inline-block;vertical-align:middle;"><path d="M8 13.8 L2.3 8.2 C0.6 6.5 0.8 3.6 2.9 2.5 C4.8 1.5 6.8 2.3 8 4 C9.2 2.3 11.2 1.5 13.1 2.5 C15.2 3.6 15.4 6.5 13.7 8.2 Z" fill="none" stroke="#a0a3aa" stroke-width="1.3" stroke-linejoin="round"/></svg><span style="vertical-align:middle;margin-left:5px">修改</span></div>
<div class="ab" style="left:1635px;top:806.4px;width:81px"><svg width="12" height="12" viewBox="0 0 16 16" style="display:inline-block;vertical-align:middle;"><path d="M8 13.8 L2.3 8.2 C0.6 6.5 0.8 3.6 2.9 2.5 C4.8 1.5 6.8 2.3 8 4 C9.2 2.3 11.2 1.5 13.1 2.5 C15.2 3.6 15.4 6.5 13.7 8.2 Z" fill="none" stroke="#a0a3aa" stroke-width="1.3" stroke-linejoin="round"/></svg><span style="vertical-align:middle;margin-left:5px">查看评论</span></div>
<div class="ab" style="left:1514px;top:839.4px;width:56px"><svg width="12" height="12" viewBox="0 0 16 16" style="display:inline-block;vertical-align:middle;"><path d="M8 13.8 L2.3 8.2 C0.6 6.5 0.8 3.6 2.9 2.5 C4.8 1.5 6.8 2.3 8 4 C9.2 2.3 11.2 1.5 13.1 2.5 C15.2 3.6 15.4 6.5 13.7 8.2 Z" fill="none" stroke="#a0a3aa" stroke-width="1.3" stroke-linejoin="round"/></svg><span style="vertical-align:middle;margin-left:5px">删除</span></div>
<div class="abs" style="left:313px;top:893.2px;width:1462px;height:1px;background:#ebeef5"></div>
<div class="abs" style="left:1028px;top:898.7px;width:90px;height:12px;background:linear-gradient(90deg,#6d7a60 0%,#8a8a70 30%,#b8a890 45%,#7a5a48 60%,#a06850 80%,#704a3a 100%)"></div>
<!--/TABLE-->
</body></html>
